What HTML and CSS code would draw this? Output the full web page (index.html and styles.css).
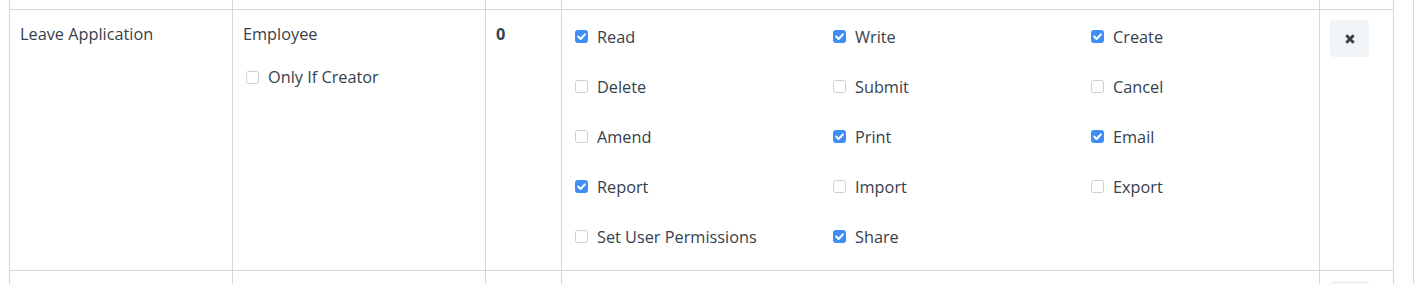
FILE: index.html
```html
<!DOCTYPE html>
<html lang="en">
<head>
<meta charset="utf-8">
<title>Permissions</title>
<link rel="stylesheet" href="styles.css">
</head>
<body>
<div class="wrap">
  <div class="perm-table">
    <div class="cell cell-top"></div>
    <div class="cell cell-top"></div>
    <div class="cell cell-top"></div>
    <div class="cell cell-top"></div>
    <div class="cell cell-top"></div>

    <div class="cell">Leave Application</div>
    <div class="cell">
      <div class="role">Employee</div>
      <label class="check check-owner"><span class="box"></span>Only If Creator</label>
    </div>
    <div class="cell level">0</div>
    <div class="cell">
      <div class="perms">
        <label class="check"><span class="box on"><svg viewBox="0 0 13 13"><path d="M3.2 6.6 L5.6 9 L9.9 4.4"/></svg></span>Read</label>
        <label class="check"><span class="box on"><svg viewBox="0 0 13 13"><path d="M3.2 6.6 L5.6 9 L9.9 4.4"/></svg></span>Write</label>
        <label class="check"><span class="box on"><svg viewBox="0 0 13 13"><path d="M3.2 6.6 L5.6 9 L9.9 4.4"/></svg></span>Create</label>
        <label class="check"><span class="box"></span>Delete</label>
        <label class="check"><span class="box"></span>Submit</label>
        <label class="check"><span class="box"></span>Cancel</label>
        <label class="check"><span class="box"></span>Amend</label>
        <label class="check"><span class="box on"><svg viewBox="0 0 13 13"><path d="M3.2 6.6 L5.6 9 L9.9 4.4"/></svg></span>Print</label>
        <label class="check"><span class="box on"><svg viewBox="0 0 13 13"><path d="M3.2 6.6 L5.6 9 L9.9 4.4"/></svg></span>Email</label>
        <label class="check"><span class="box on"><svg viewBox="0 0 13 13"><path d="M3.2 6.6 L5.6 9 L9.9 4.4"/></svg></span>Report</label>
        <label class="check"><span class="box"></span>Import</label>
        <label class="check"><span class="box"></span>Export</label>
        <label class="check"><span class="box"></span>Set User Permissions</label>
        <label class="check"><span class="box on"><svg viewBox="0 0 13 13"><path d="M3.2 6.6 L5.6 9 L9.9 4.4"/></svg></span>Share</label>
      </div>
    </div>
    <div class="cell">
      <button class="btn-remove" type="button" aria-label="Remove"><svg viewBox="0 0 10 10"><path d="M1.3 1.3 L8.7 8.7 M8.7 1.3 L1.3 8.7"/></svg></button>
    </div>

    <div class="cell cell-next"></div>
    <div class="cell cell-next"></div>
    <div class="cell cell-next"></div>
    <div class="cell cell-next"></div>
    <div class="cell cell-next">
      <button class="btn-remove" type="button" aria-label="Remove"><svg viewBox="0 0 10 10"><path d="M1.3 1.3 L8.7 8.7 M8.7 1.3 L1.3 8.7"/></svg></button>
    </div>
  </div>
</div>
</body>
</html>
```

FILE: styles.css
```css
* {
  box-sizing: border-box;
}

html, body {
  margin: 0;
  padding: 0;
  background: #ffffff;
  overflow: hidden;
}

body {
  font-family: "Open Sans", "Noto Sans", sans-serif;
  font-size: 16.3px;
  line-height: 28px;
  color: #36414c;
  height: 284px;
}

.wrap {
  margin-left: 9px;
  width: 1405px;
  border-right: 1px solid #d1d8dd;
  height: 284px;
  overflow: hidden;
}

.perm-table {
  display: grid;
  grid-template-columns: 223px 253px 76px 758px 74px;
  grid-template-rows: 10px 261px 13px;
  width: 1385px;
  border-left: 1px solid #d1d8dd;
}

.cell {
  border-right: 1px solid #d1d8dd;
  border-bottom: 1px solid #d1d8dd;
  padding: 10px;
}

.cell-top {
  padding: 0;
}

.cell-next {
  border-bottom: none;
  overflow: hidden;
}

.level {
  font-weight: 700;
}

.role {
  height: 28px;
}

.check {
  display: flex;
  align-items: center;
  height: 28px;
  white-space: nowrap;
  cursor: pointer;
}

.check-owner {
  margin-top: 15px;
}

.box {
  flex: none;
  width: 13px;
  height: 13px;
  margin-left: 3px;
  margin-right: 9px;
  border: 1px solid #c9d1d7;
  border-radius: 2.5px;
  background: #ffffff;
  display: flex;
  align-items: center;
  justify-content: center;
}

.box.on {
  background: #3d8ef5;
  border-color: #3d8ef5;
}

.box svg {
  width: 13px;
  height: 13px;
  flex: none;
}

.box svg path {
  fill: none;
  stroke: #ffffff;
  stroke-width: 2.1;
  stroke-linecap: round;
  stroke-linejoin: round;
}

.perms {
  display: grid;
  grid-template-columns: 258px 258px 218px;
  grid-auto-rows: 28px;
  row-gap: 22px;
  padding-top: 2.5px;
}

.btn-remove {
  display: flex;
  align-items: center;
  justify-content: center;
  width: 39px;
  height: 37px;
  padding: 0;
  border: none;
  border-radius: 4px;
  background: #f0f4f7;
  cursor: pointer;
}

.btn-remove svg {
  width: 10px;
  height: 10px;
}

.btn-remove svg path {
  fill: none;
  stroke: #36414c;
  stroke-width: 2.9;
  stroke-linecap: butt;
}
```
